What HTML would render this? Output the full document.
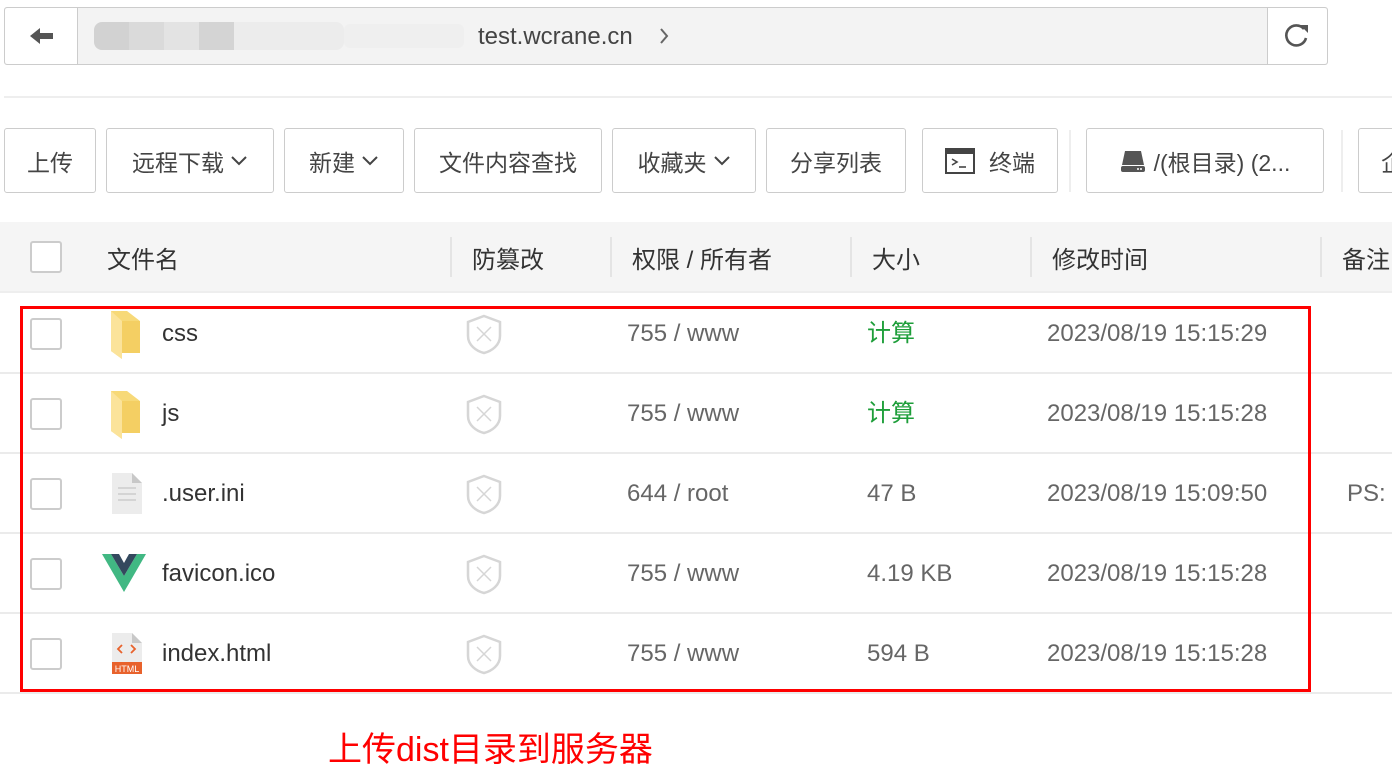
<!DOCTYPE html>
<html><head><meta charset="utf-8"><style>
*{margin:0;padding:0;box-sizing:border-box}
body{width:1392px;height:782px;overflow:hidden;background:#fff;font-family:"Liberation Sans","Noto Sans CJK SC",sans-serif;position:relative;color:#333}
.a{position:absolute}
.btn{position:absolute;top:128px;height:65px;border:1px solid #ccc;border-radius:3px;background:#fff;font-size:23px;color:#444;display:flex;align-items:center;justify-content:center;gap:6px}
.hd{position:absolute;top:222px;left:0;width:1392px;height:71px;background:#f5f5f5;border-bottom:2px solid #eee}
.ht{position:absolute;top:240px;font-size:24px;color:#333}
.vs{position:absolute;top:237px;width:2px;height:40px;background:#e4e4e4}
.cb{position:absolute;left:30px;width:32px;height:32px;border:2px solid #ccc;border-radius:3px;background:#fff}
.line{position:absolute;left:0;width:1392px;height:2px;background:#ebebeb}
.t{position:absolute;font-size:24px;color:#666;line-height:26px}
.n{color:#333}
.g{color:#1e9e3a}
</style></head><body>
<div class="a" style="left:4px;top:7px;width:1324px;height:58px;border:1px solid #ccc;border-radius:3px;background:#f3f3f3"></div>
<div class="a" style="left:5px;top:8px;width:73px;height:56px;background:#fff;border-right:1px solid #ccc;border-radius:3px 0 0 3px"></div>
<svg class="a" style="left:30px;top:27px" width="24" height="18" viewBox="0 0 24 18"><path d="M0 9 L10 1 V6 H23 V12 H10 V17 Z" fill="#555"/></svg>
<div class="a" style="left:94px;top:22px;width:250px;height:28px;border-radius:8px;background:linear-gradient(90deg,#d2d2d2 0,#d2d2d2 35px,#dadada 35px,#dadada 70px,#e3e3e3 70px,#e3e3e3 105px,#d4d4d4 105px,#d4d4d4 140px,#ececec 140px,#ececec 250px)"></div>
<div class="a" style="left:344px;top:24px;width:120px;height:24px;background:#efefef;border-radius:6px"></div>
<div class="a" style="left:478px;top:23px;font-size:24px;color:#444">test.wcrane.cn</div>
<svg class="a" style="left:659px;top:27px" width="10" height="18" viewBox="0 0 10 18"><path d="M2 2 L8 9 L2 16" stroke="#666" stroke-width="2" fill="none"/></svg>
<div class="a" style="left:1267px;top:8px;width:60px;height:56px;background:#fff;border-left:1px solid #ccc;border-radius:0 3px 3px 0"></div>
<svg class="a" style="left:1282px;top:22px" width="30" height="28" viewBox="0 0 30 28"><path d="M22 7 A10 10 0 1 0 24 16" stroke="#555" stroke-width="2.6" fill="none"/><path d="M18 3 L26 3 L26 11 Z" fill="#555"/></svg>
<div class="a" style="left:4px;top:96px;width:1388px;height:2px;background:#eee"></div>
<div class="btn" style="left:4px;width:92px">上传</div>
<div class="btn" style="left:106px;width:168px">远程下载<svg width="18" height="12" viewBox="0 0 18 12"><path d="M2 2 L9 9 L16 2" stroke="#444" stroke-width="2" fill="none"/></svg></div>
<div class="btn" style="left:284px;width:120px">新建<svg width="18" height="12" viewBox="0 0 18 12"><path d="M2 2 L9 9 L16 2" stroke="#444" stroke-width="2" fill="none"/></svg></div>
<div class="btn" style="left:414px;width:188px">文件内容查找</div>
<div class="btn" style="left:612px;width:144px">收藏夹<svg width="18" height="12" viewBox="0 0 18 12"><path d="M2 2 L9 9 L16 2" stroke="#444" stroke-width="2" fill="none"/></svg></div>
<div class="btn" style="left:766px;width:140px">分享列表</div>
<div class="btn" style="left:922px;width:136px;gap:14px"><svg width="30" height="26" viewBox="0 0 30 26"><rect x="1" y="1" width="28" height="24" fill="none" stroke="#444" stroke-width="2"/><rect x="1" y="1" width="28" height="5" fill="#444"/><path d="M7 11 L12 14 L7 17" stroke="#444" stroke-width="1.6" fill="none"/><path d="M14 19 H21" stroke="#444" stroke-width="1.6"/></svg>终端</div>
<div class="a" style="left:1069px;top:130px;width:2px;height:62px;background:#eee"></div>
<div class="btn" style="left:1086px;width:238px;gap:8px"><svg width="26" height="24" viewBox="0 0 26 24"><path d="M5 2 H21 L24 16 H2 Z" fill="#555"/><rect x="1" y="17" width="24" height="6" rx="2" fill="#555"/><circle cx="18" cy="20" r="1" fill="#fff"/><circle cx="21" cy="20" r="1" fill="#fff"/></svg>/(根目录) (2...</div>
<div class="a" style="left:1341px;top:130px;width:2px;height:62px;background:#eee"></div>
<div class="btn" style="left:1358px;width:60px;justify-content:flex-start;padding-left:22px">企</div>
<div class="hd"></div>
<div class="cb" style="top:241px"></div>
<div class="ht" style="left:107px">文件名</div>
<div class="vs" style="left:450px"></div><div class="ht" style="left:472px">防篡改</div>
<div class="vs" style="left:610px"></div><div class="ht" style="left:632px">权限 / 所有者</div>
<div class="vs" style="left:850px"></div><div class="ht" style="left:872px">大小</div>
<div class="vs" style="left:1030px"></div><div class="ht" style="left:1052px">修改时间</div>
<div class="vs" style="left:1320px"></div><div class="ht" style="left:1342px">备注</div>
<div class="line" style="top:372px"></div><div class="line" style="top:452px"></div><div class="line" style="top:532px"></div><div class="line" style="top:612px"></div><div class="line" style="top:692px"></div>
<div class="cb" style="top:318px"></div><div class="cb" style="top:398px"></div><div class="cb" style="top:478px"></div><div class="cb" style="top:558px"></div><div class="cb" style="top:638px"></div>
<svg class="a" style="left:110px;top:311px" width="34" height="48" viewBox="0 0 34 48"><path d="M1 0 H17 L30 10 V42 H12 L12 48 L1 40 Z" fill="#f7d978"/><path d="M12 10 H30 V42 H12 Z" fill="#f4cf63"/><path d="M1 0 L12 10 V48 L1 40 Z" fill="#fbe39a"/></svg>
<svg class="a" style="left:110px;top:391px" width="34" height="48" viewBox="0 0 34 48"><path d="M1 0 H17 L30 10 V42 H12 L12 48 L1 40 Z" fill="#f7d978"/><path d="M12 10 H30 V42 H12 Z" fill="#f4cf63"/><path d="M1 0 L12 10 V48 L1 40 Z" fill="#fbe39a"/></svg>
<svg class="a" style="left:111px;top:473px" width="32" height="42" viewBox="0 0 32 42"><path d="M1 0 H21 L31 10 V41 H1 Z" fill="#ececec"/><path d="M21 0 L31 10 H21 Z" fill="#c8c8c8"/><path d="M7 15 H25 M7 21 H25 M7 27 H25" stroke="#ccc" stroke-width="1.5"/></svg>
<svg class="a" style="left:102px;top:554px" width="44" height="38" viewBox="0 0 44 38"><path d="M0 0 H9 L22 22 L35 0 H44 L22 38 Z" fill="#41b883"/><path d="M9 0 H17 L22 9 L27 0 H35 L22 22 Z" fill="#34495e"/></svg>
<svg class="a" style="left:111px;top:633px" width="32" height="42" viewBox="0 0 32 42"><path d="M1 0 H21 L31 10 V41 H1 Z" fill="#ececec"/><path d="M21 0 L31 10 H21 Z" fill="#c8c8c8"/><path d="M11 12 L7 16 L11 20 M20 12 L24 16 L20 20" stroke="#e8622c" stroke-width="1.8" fill="none"/><rect x="1" y="29" width="30" height="12" fill="#e8622c"/><text x="16" y="39" font-size="9" fill="#fff" text-anchor="middle" font-family="Liberation Sans">HTML</text></svg>
<div class="t n" style="left:162px;top:321px">css</div>
<div class="t n" style="left:162px;top:401px">js</div>
<div class="t n" style="left:162px;top:481px">.user.ini</div>
<div class="t n" style="left:162px;top:561px">favicon.ico</div>
<div class="t n" style="left:162px;top:641px">index.html</div>
<svg class="a" style="left:466px;top:314px" width="36" height="41" viewBox="0 0 36 41"><path d="M18 2 L34 8 V22 C34 31 26 37 18 39 C10 37 2 31 2 22 V8 Z" fill="none" stroke="#d6d6d6" stroke-width="2.5"/><path d="M11 13 L25 27 M25 13 L11 27" stroke="#d6d6d6" stroke-width="1.5"/></svg>
<svg class="a" style="left:466px;top:394px" width="36" height="41" viewBox="0 0 36 41"><path d="M18 2 L34 8 V22 C34 31 26 37 18 39 C10 37 2 31 2 22 V8 Z" fill="none" stroke="#d6d6d6" stroke-width="2.5"/><path d="M11 13 L25 27 M25 13 L11 27" stroke="#d6d6d6" stroke-width="1.5"/></svg>
<svg class="a" style="left:466px;top:474px" width="36" height="41" viewBox="0 0 36 41"><path d="M18 2 L34 8 V22 C34 31 26 37 18 39 C10 37 2 31 2 22 V8 Z" fill="none" stroke="#d6d6d6" stroke-width="2.5"/><path d="M11 13 L25 27 M25 13 L11 27" stroke="#d6d6d6" stroke-width="1.5"/></svg>
<svg class="a" style="left:466px;top:554px" width="36" height="41" viewBox="0 0 36 41"><path d="M18 2 L34 8 V22 C34 31 26 37 18 39 C10 37 2 31 2 22 V8 Z" fill="none" stroke="#d6d6d6" stroke-width="2.5"/><path d="M11 13 L25 27 M25 13 L11 27" stroke="#d6d6d6" stroke-width="1.5"/></svg>
<svg class="a" style="left:466px;top:634px" width="36" height="41" viewBox="0 0 36 41"><path d="M18 2 L34 8 V22 C34 31 26 37 18 39 C10 37 2 31 2 22 V8 Z" fill="none" stroke="#d6d6d6" stroke-width="2.5"/><path d="M11 13 L25 27 M25 13 L11 27" stroke="#d6d6d6" stroke-width="1.5"/></svg>
<div class="t" style="left:627px;top:321px">755 / www</div>
<div class="t" style="left:627px;top:401px">755 / www</div>
<div class="t" style="left:627px;top:481px">644 / root</div>
<div class="t" style="left:627px;top:561px">755 / www</div>
<div class="t" style="left:627px;top:641px">755 / www</div>
<div class="t g" style="left:867px;top:321px">计算</div>
<div class="t g" style="left:867px;top:401px">计算</div>
<div class="t" style="left:867px;top:481px">47 B</div>
<div class="t" style="left:867px;top:561px">4.19 KB</div>
<div class="t" style="left:867px;top:641px">594 B</div>
<div class="t" style="left:1047px;top:321px">2023/08/19 15:15:29</div>
<div class="t" style="left:1047px;top:401px">2023/08/19 15:15:28</div>
<div class="t" style="left:1047px;top:481px">2023/08/19 15:09:50</div>
<div class="t" style="left:1047px;top:561px">2023/08/19 15:15:28</div>
<div class="t" style="left:1047px;top:641px">2023/08/19 15:15:28</div>
<div class="t" style="left:1347px;top:481px">PS:</div>
<div class="a" style="left:20px;top:306px;width:1291px;height:386px;border:3px solid #f00"></div>
<div class="a" style="left:328px;top:729px;font-size:34px;color:#f00;line-height:42px">上传dist目录到服务器</div>
</body></html>
